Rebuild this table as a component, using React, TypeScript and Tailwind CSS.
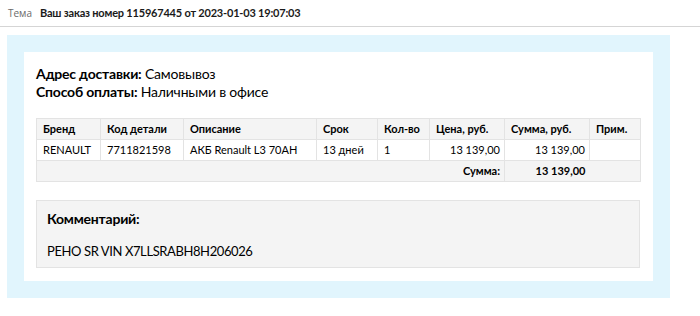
import React from "react";

const cols = [64, 83, 133, 61, 52, 75, 85, 51];

export default function App() {
  const th = "border border-[#e3e3e3] bg-[#f4f4f4] px-[6px] h-[21px] text-left font-bold";
  const td = "border border-[#e3e3e3] bg-white px-[6px] h-[21px]";
  return (
    <div className="w-[700px] h-[316px] bg-white overflow-hidden" style={{ fontFamily: "'Open Sans', sans-serif" }}>
      <div className="h-[27px] border-b border-[#d5d5d5] flex items-center pl-[8px] gap-[8px]">
        <span className="text-[10px] text-[#6a6a6a]">Тема</span>
        <span className="text-[11px] font-bold text-[#1a1a1a] tracking-[-0.2px]" style={{ fontFamily: "Lato, sans-serif" }}>
          Ваш заказ номер 115967445 от 2023-01-03 19:07:03
        </span>
      </div>
      <div className="mt-[8px] ml-[7px] w-[663px] h-[263px] bg-[#e1f5fd] p-[17px]">
        <div className="w-full h-full bg-white pl-[12px] pr-[13px] pt-[13px] text-[#000]" style={{ fontFamily: "Lato, 'Liberation Sans', sans-serif" }}>
          <div className="text-[14px] leading-[18px] tracking-[-0.2px]">
            <div><b>Адрес доставки:</b> Самовывоз</div>
            <div><b>Способ оплаты:</b> Наличными в офисе</div>
          </div>
          <table className="mt-[17px] border-collapse table-fixed text-[11px] w-[604px]">
            <colgroup>
              {cols.map((w, i) => (
                <col key={i} style={{ width: w }} />
              ))}
            </colgroup>
            <thead>
              <tr>
                <th className={th}>Бренд</th>
                <th className={th}>Код детали</th>
                <th className={th}>Описание</th>
                <th className={th}>Срок</th>
                <th className={th}>Кол-во</th>
                <th className={th}>Цена, руб.</th>
                <th className={th}>Сумма, руб.</th>
                <th className={th}>Прим.</th>
              </tr>
            </thead>
            <tbody>
              <tr>
                <td className={td}>RENAULT</td>
                <td className={td}>7711821598</td>
                <td className={td}>АКБ Renault L3 70AH</td>
                <td className={td}>13 дней</td>
                <td className={td}>1</td>
                <td className={td + " text-right !pr-[4px]"}>13 139,00</td>
                <td className={td + " text-right !pr-[4px]"}>13 139,00</td>
                <td className={td}></td>
              </tr>
              <tr className="bg-[#f4f4f4]">
                <td colSpan={6} className="border border-[#e3e3e3] h-[21px] text-right font-bold pr-[4px]">
                  Сумма:
                </td>
                <td className="border-y border-[#e3e3e3] h-[21px] text-right font-bold pr-[4px]">13 139,00</td>
                <td className="border-y border-r border-[#e3e3e3] h-[21px]"></td>
              </tr>
            </tbody>
          </table>
          <div className="mt-[18px] w-[604px] h-[68px] bg-[#f4f4f4] border border-[#e3e3e3] pl-[10px] pt-[9px] text-[13px]">
            <div className="font-bold leading-[18px] text-[14px] tracking-[-0.2px]">Комментарий:</div>
            <div className="mt-[14px] leading-[18px] tracking-[-0.4px]">PEHO SR VIN X7LLSRABH8H206026</div>
          </div>
        </div>
      </div>
    </div>
  );
}
